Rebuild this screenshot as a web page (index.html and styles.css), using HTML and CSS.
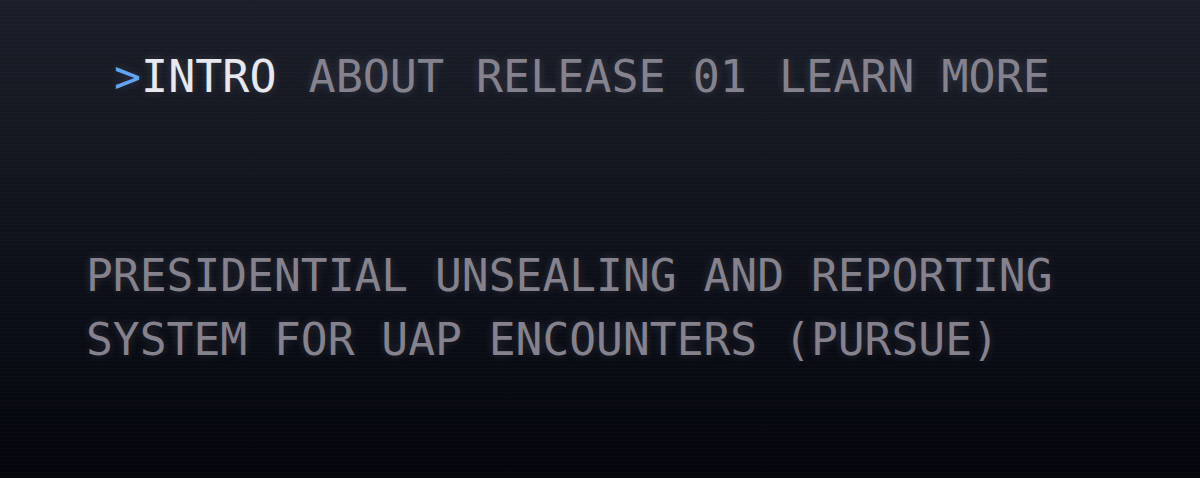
FILE: index.html
```html
<!DOCTYPE html>
<html lang="en">
<head>
<meta charset="utf-8">
<title>PURSUE</title>
<link rel="stylesheet" href="styles.css">
</head>
<body>
<div class="screen">
  <nav class="nav">
    <a class="nav-item active"><span class="caret">&gt;</span>INTRO</a>
    <a class="nav-item">ABOUT</a>
    <a class="nav-item">RELEASE 01</a>
    <a class="nav-item">LEARN MORE</a>
  </nav>
  <h1 class="title">PRESIDENTIAL UNSEALING AND REPORTING<br>SYSTEM FOR UAP ENCOUNTERS (PURSUE)</h1>
</div>
</body>
</html>
```

FILE: styles.css
```css
html, body {
  margin: 0;
  padding: 0;
  height: 100%;
}
body {
  background: linear-gradient(180deg, #1b1f29 0%, #12151e 40%, #0a0d15 70%, #04060c 100%);
  font-family: "DejaVu Sans Mono", "Liberation Mono", monospace;
  overflow: hidden;
}
.screen {
  height: 478px;
  box-sizing: border-box;
  padding-top: 50px;
  background-image: repeating-linear-gradient(180deg, rgba(255,255,255,0.012) 0px, rgba(255,255,255,0.012) 1px, transparent 1px, transparent 4px);
}
.nav {
  display: flex;
  gap: 32px;
  padding-left: 114px;
  font-size: 45px;
  line-height: 54px;
  white-space: pre;
}
.nav-item {
  color: #85828e;
  text-shadow: 0 0 10px rgba(200,200,220,0.18);
}
.nav-item.active {
  color: #e8e8ee;
}
.caret {
  color: #63a4f2;
}
.title {
  margin: 140px 0 0 0;
  padding-left: 86px;
  font-size: 44.6px;
  line-height: 64px;
  font-weight: normal;
  color: #85828e;
  text-shadow: 0 0 10px rgba(200,200,220,0.18);
  white-space: nowrap;
}
```
